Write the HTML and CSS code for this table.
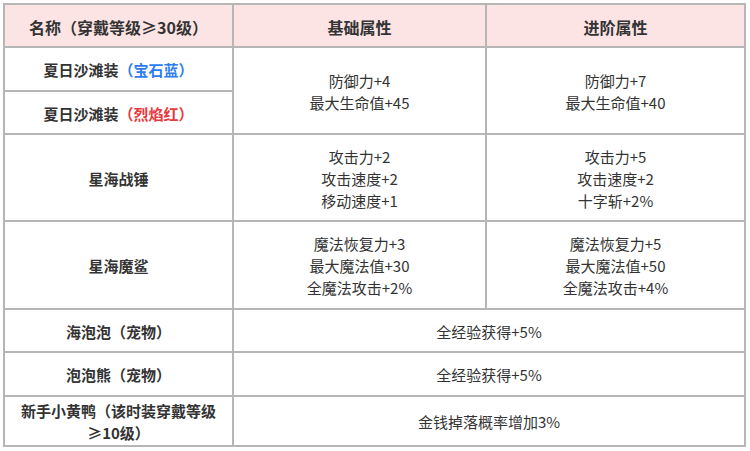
FILE: index.html
```html
<!DOCTYPE html>
<html lang="zh">
<head>
<meta charset="utf-8">
<link rel="stylesheet" href="styles.css">
</head>
<body>
<table class="attr-table">
  <colgroup>
    <col class="c1"><col class="c2"><col class="c3">
  </colgroup>
  <thead>
    <tr class="h-head">
      <th>名称（穿戴等级≥30级）</th>
      <th>基础属性</th>
      <th>进阶属性</th>
    </tr>
  </thead>
  <tbody>
    <tr class="h-42">
      <td class="name">夏日沙滩装<span class="blue">（宝石蓝）</span></td>
      <td rowspan="2">防御力+4<br>最大生命值+45</td>
      <td rowspan="2">防御力+7<br>最大生命值+40</td>
    </tr>
    <tr class="h-41">
      <td class="name">夏日沙滩装<span class="red">（烈焰红）</span></td>
    </tr>
    <tr class="h-85">
      <td class="name">星海战锤</td>
      <td>攻击力+2<br>攻击速度+2<br>移动速度+1</td>
      <td>攻击力+5<br>攻击速度+2<br>十字斩+2%</td>
    </tr>
    <tr class="h-86">
      <td class="name">星海魔鲨</td>
      <td>魔法恢复力+3<br>最大魔法值+30<br>全魔法攻击+2%</td>
      <td>魔法恢复力+5<br>最大魔法值+50<br>全魔法攻击+4%</td>
    </tr>
    <tr class="h-41">
      <td class="name">海泡泡（宠物）</td>
      <td colspan="2">全经验获得+5%</td>
    </tr>
    <tr class="h-42">
      <td class="name">泡泡熊（宠物）</td>
      <td colspan="2">全经验获得+5%</td>
    </tr>
    <tr class="h-48">
      <td class="name">新手小黄鸭（该时装穿戴等级≥10级）</td>
      <td colspan="2">金钱掉落概率增加3%</td>
    </tr>
  </tbody>
</table>
</body>
</html>
```
FILE: styles.css
```css
html, body {
  margin: 0;
  padding: 0;
  background: #ffffff;
}
body {
  padding: 3px 0 0 3px;
  font-family: "Noto Sans CJK SC", "Noto Sans", sans-serif;
  color: #333333;
}
.attr-table {
  table-layout: fixed;
  width: 743px;
  border-collapse: separate;
  border-spacing: 2px;
  background: #b6b6b6;
}
.c1 { width: 227px; }
.c2 { width: 251px; }
.c3 { width: 257px; }
.attr-table th,
.attr-table td {
  background: #ffffff;
  padding: 2px 6px 0;
  text-align: center;
  vertical-align: middle;
  font-size: 15px;
  line-height: 22px;
  font-weight: normal;
}
.attr-table th {
  background: #fde4e4;
  font-size: 16px;
  font-weight: bold;
}
.attr-table td.name {
  font-weight: bold;
}
.blue { color: #2f7cf0; }
.red { color: #e8383d; }
.h-head { height: 41px; }
.h-41 { height: 41px; }
.h-42 { height: 42px; }
.h-85 { height: 85px; }
.h-86 { height: 86px; }
.h-48 { height: 48px; }
```
